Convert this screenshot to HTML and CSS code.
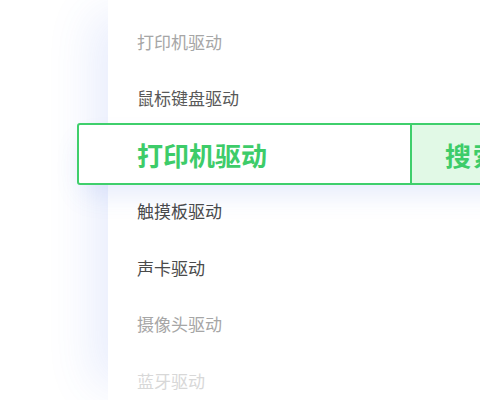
FILE: index.html
```html
<!DOCTYPE html>
<html lang="zh-CN">
<head>
<meta charset="utf-8">
<link rel="stylesheet" href="styles.css">
</head>
<body>
<div class="stage">
  <div class="panel">
    <ul class="list">
      <li class="item fade2">打印机驱动</li>
      <li class="item fade1">鼠标键盘驱动</li>
      <li class="item spacer"></li>
      <li class="item">触摸板驱动</li>
      <li class="item">声卡驱动</li>
      <li class="item fade2">摄像头驱动</li>
      <li class="item fade3">蓝牙驱动</li>
    </ul>
  </div>
  <div class="selected">
    <div class="sel-text">打印机驱动</div>
    <div class="sel-btn">搜索</div>
  </div>
</div>
</body>
</html>
```

FILE: styles.css
```css
html, body {
  margin: 0;
  padding: 0;
  background: #ffffff;
}
body {
  font-family: "Noto Sans CJK SC", "Noto Sans", sans-serif;
  width: 480px;
  height: 400px;
  overflow: hidden;
}
.stage {
  position: relative;
  width: 480px;
  height: 400px;
  overflow: hidden;
}
.panel {
  margin-left: 108px;
  height: 400px;
  background: #ffffff;
  box-shadow: -30px 0 44px -16px rgba(70, 110, 230, 0.13);
}
.list {
  list-style: none;
  margin: 0;
  padding: 12.75px 0 0 29px;
}
.item {
  height: 56.5px;
  display: flex;
  align-items: center;
  font-size: 17px;
  color: #4a4a4a;
}
.fade1 { color: #585858; }
.fade2 { color: #a6a6a6; }
.fade3 { color: #d8d8d8; }
.selected {
  position: absolute;
  left: 77px;
  top: 123px;
  width: 440px;
  height: 62px;
  box-sizing: border-box;
  border: 2px solid #3fcf6c;
  border-radius: 3px;
  background: #ffffff;
  display: flex;
  box-shadow: 0 14px 28px -6px rgba(70, 110, 230, 0.15);
}
.sel-text {
  width: 333px;
  box-sizing: border-box;
  padding-left: 58px;
  display: flex;
  align-items: center;
  font-size: 26px;
  font-weight: 700;
  color: #3dcc69;
  border-right: 2px solid #3fcf6c;
}
.sel-btn {
  flex: 1;
  background: #e1f9e6;
  display: flex;
  align-items: center;
  padding-left: 33px;
  font-size: 26px;
  font-weight: 700;
  color: #3dcc69;
  letter-spacing: 2px;
}
```
